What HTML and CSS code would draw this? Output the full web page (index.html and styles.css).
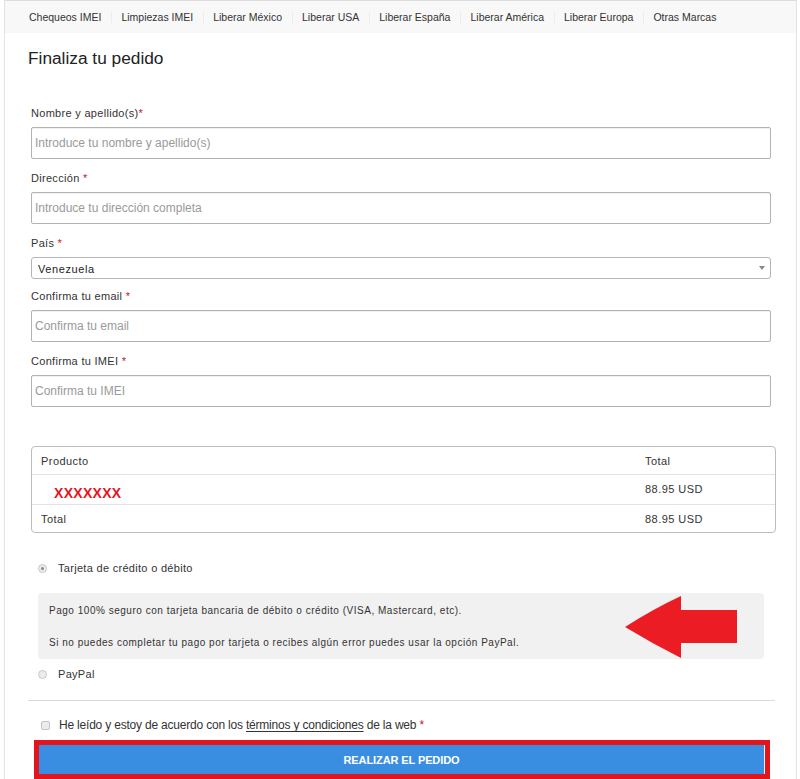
FILE: index.html
```html
<!DOCTYPE html>
<html lang="es">
<head>
<meta charset="utf-8">
<title>Finaliza tu pedido</title>
<link rel="stylesheet" href="styles.css">
</head>
<body>
<div class="page">
  <nav class="nav">
    <a class="nav-item">Chequeos IMEI</a>
    <a class="nav-item">Limpiezas IMEI</a>
    <a class="nav-item">Liberar México</a>
    <a class="nav-item">Liberar USA</a>
    <a class="nav-item">Liberar España</a>
    <a class="nav-item">Liberar América</a>
    <a class="nav-item">Liberar Europa</a>
    <a class="nav-item">Otras Marcas</a>
  </nav>
  <main class="main">
    <h1 class="title">Finaliza tu pedido</h1>
    <form class="form">
      <div class="group">
        <label class="label">Nombre y apellido(s)<span class="req">*</span></label>
        <input class="input" type="text" placeholder="Introduce tu nombre y apellido(s)">
      </div>
      <div class="group">
        <label class="label">Dirección <span class="req">*</span></label>
        <input class="input" type="text" placeholder="Introduce tu dirección completa">
      </div>
      <div class="group group-tight">
        <label class="label">País <span class="req">*</span></label>
        <div class="select"><span class="select-value">Venezuela</span><span class="select-arrow"></span></div>
      </div>
      <div class="group">
        <label class="label">Confirma tu email <span class="req">*</span></label>
        <input class="input" type="text" placeholder="Confirma tu email">
      </div>
      <div class="group">
        <label class="label">Confirma tu IMEI <span class="req">*</span></label>
        <input class="input" type="text" placeholder="Confirma tu IMEI">
      </div>

      <div class="order">
        <div class="row row-head"><span class="c1">Producto</span><span class="c2">Total</span></div>
        <div class="row row-item"><span class="c1 product">XXXXXXX</span><span class="c2">88.95 USD</span></div>
        <div class="row row-total"><span class="c1">Total</span><span class="c2">88.95 USD</span></div>
      </div>

      <div class="pay">
        <label class="option"><input class="radio" type="radio" name="pay" checked> <span>Tarjeta de crédito o débito</span></label>
        <div class="pay-box">
          <p class="pay-text">Pago 100% seguro con tarjeta bancaria de débito o crédito (VISA, Mastercard, etc).</p>
          <p class="pay-text">Si no puedes completar tu pago por tarjeta o recibes algún error puedes usar la opción PayPal.</p>
          <svg class="arrow" width="112" height="62" viewBox="0 0 112 62"><path d="M0 31 Q28 13 56 0 L56 14 L112 14 L112 47 L56 47 L56 62 Q28 48 0 31 Z" fill="#ec1c24"/></svg>
        </div>
        <label class="option option-paypal"><input class="radio" type="radio" name="pay"> <span>PayPal</span></label>
      </div>

      <hr class="divider">

      <label class="terms"><input class="check" type="checkbox"> <span>He leído y estoy de acuerdo con los <u>términos y condiciones</u> de la web <span class="req">*</span></span></label>

      <div class="btn-frame"><button class="btn" type="button">REALIZAR EL PEDIDO</button></div>
    </form>
  </main>
</div>
</body>
</html>
```

FILE: styles.css
```css
* { box-sizing: border-box; }
html, body { margin: 0; padding: 0; background: #fff; }
body { font-family: "Liberation Sans", Arial, sans-serif; color: #333; }

.page {
  margin-left: 4px;
  width: 793px;
  min-height: 779px;
  border-left: 1px solid #e3e3e3;
  border-right: 1px solid #e3e3e3;
  border-top: 1px solid #dcdcdc;
}

.nav {
  display: flex;
  align-items: center;
  height: 32px;
  background: #f8f8f8;
  padding-left: 14px;
  white-space: nowrap;
}
.nav-item {
  position: relative;
  padding: 0 10px;
  font-size: 10.5px;
  letter-spacing: 0;
  color: #333;
  line-height: 14px;
  margin-top: -1px;
  flex: none;
}
.nav-item + .nav-item::before {
  content: "";
  position: absolute;
  left: 0;
  top: 2px;
  height: 11px;
  border-left: 1px solid #ececec;
}

.main { padding: 0 24px 0 26px; }

.title {
  margin: 15px 0 0 -3px;
  font-size: 17.3px;
  line-height: 20px;
  font-weight: normal;
  color: #222;
}

.form { margin-top: 38px; }

.group { margin-bottom: 12px; }
.group-tight { margin-bottom: 10px; }
.label {
  display: block;
  font-size: 11px;
  letter-spacing: 0.3px;
  line-height: 14px;
  margin-bottom: 7px;
  color: #333;
}
.req { color: #c8102e; }

.input {
  display: block;
  width: 740px;
  height: 32px;
  border: 1px solid #b3b3b3;
  border-radius: 2px;
  padding: 0 3px;
  font-family: "Liberation Sans", Arial, sans-serif;
  font-size: 12px;
  color: #333;
  background: #fff;
  box-shadow: inset 0 1px 1px rgba(0,0,0,0.06);
}
.input::placeholder { color: #9a9a9a; }

.select {
  display: flex;
  align-items: center;
  justify-content: space-between;
  width: 740px;
  height: 22px;
  border: 1px solid #b5b5b5;
  border-radius: 3px;
  padding: 0 5px 0 6px;
  background: #fff;
}
.select-value { font-size: 11px; letter-spacing: 0.6px; color: #222; margin-top: 2px; }
.select-arrow {
  width: 0; height: 0;
  border-left: 3px solid transparent;
  border-right: 3px solid transparent;
  border-top: 4px solid #888;
}

.order {
  margin-top: 39px;
  width: 745px;
  border: 1px solid #bdbdbd;
  border-radius: 4px;
}
.row {
  display: flex;
  align-items: center;
  font-size: 11px;
  letter-spacing: 0.45px;
  color: #333;
}
.row + .row { border-top: 1px solid #e3e3e3; }
.row-head { height: 27px; }
.row-item { height: 30px; }
.row-total { height: 28px; }
.c1 { flex: 1; padding-left: 9px; }
.c2 { width: 130px; }
.row-item .c2 { margin-top: -2px; }
.product {
  padding-left: 22px;
  color: #e8131c;
  font-weight: bold;
  font-size: 14px;
  letter-spacing: 0.3px;
  margin-top: 6px;
}

.pay { margin-top: 28px; }
.option {
  display: flex;
  align-items: center;
  font-size: 11px;
  letter-spacing: 0.3px;
  color: #333;
  padding-left: 7px;
  height: 14px;
}
.option span { margin-left: 11px; }
.radio {
  appearance: none;
  -webkit-appearance: none;
  margin: 0;
  width: 9px; height: 9px;
  border-radius: 50%;
  border: 1px solid #c8c8c8;
  background: #ececec;
  position: relative;
}
.radio:checked::after {
  content: "";
  position: absolute;
  left: 2px; top: 2px;
  width: 3px; height: 3px;
  border-radius: 50%;
  background: #8a8a8a;
}

.pay-box {
  position: relative;
  margin: 18px 0 0 7px;
  width: 726px;
  height: 66px;
  background: #f1f1f1;
  border-radius: 4px;
  padding: 11px 11px;
}
.pay-text {
  margin: 0 0 18px;
  font-size: 10px;
  line-height: 14px;
  letter-spacing: 0.52px;
  color: #333;
}
.arrow { position: absolute; left: 587px; top: 3px; }

.option-paypal { margin-top: 8px; }

.divider {
  margin: 19px 0 0 -3px;
  width: 747px;
  border: 0;
  border-top: 1px solid #dadada;
  height: 0;
}

.terms {
  display: flex;
  align-items: center;
  margin-top: 17px;
  padding-left: 10px;
  font-size: 12px;
  letter-spacing: -0.2px;
  color: #333;
  height: 14px;
}
.terms > span { margin-left: 9px; }
.terms u { text-decoration-thickness: 1px; text-underline-offset: 2px; }
.check {
  appearance: none;
  -webkit-appearance: none;
  margin: 0;
  width: 9px; height: 9px;
  border: 1px solid #c4c4c4;
  border-radius: 2px;
  background: #ececec;
}

.btn-frame {
  margin: 8px 0 0 3px;
  width: 736px;
  height: 39px;
  border: 5px solid #e3141c;
  background: #e3141c;
}
.btn {
  display: block;
  width: 100%;
  height: 100%;
  border: 0;
  border-right: 1px solid #f0f0f0;
  background: #3a8ee2;
  color: #fff;
  font-family: "Liberation Sans", Arial, sans-serif;
  font-weight: bold;
  font-size: 11px;
  letter-spacing: -0.1px;
  padding: 0;
  cursor: pointer;
}
```
